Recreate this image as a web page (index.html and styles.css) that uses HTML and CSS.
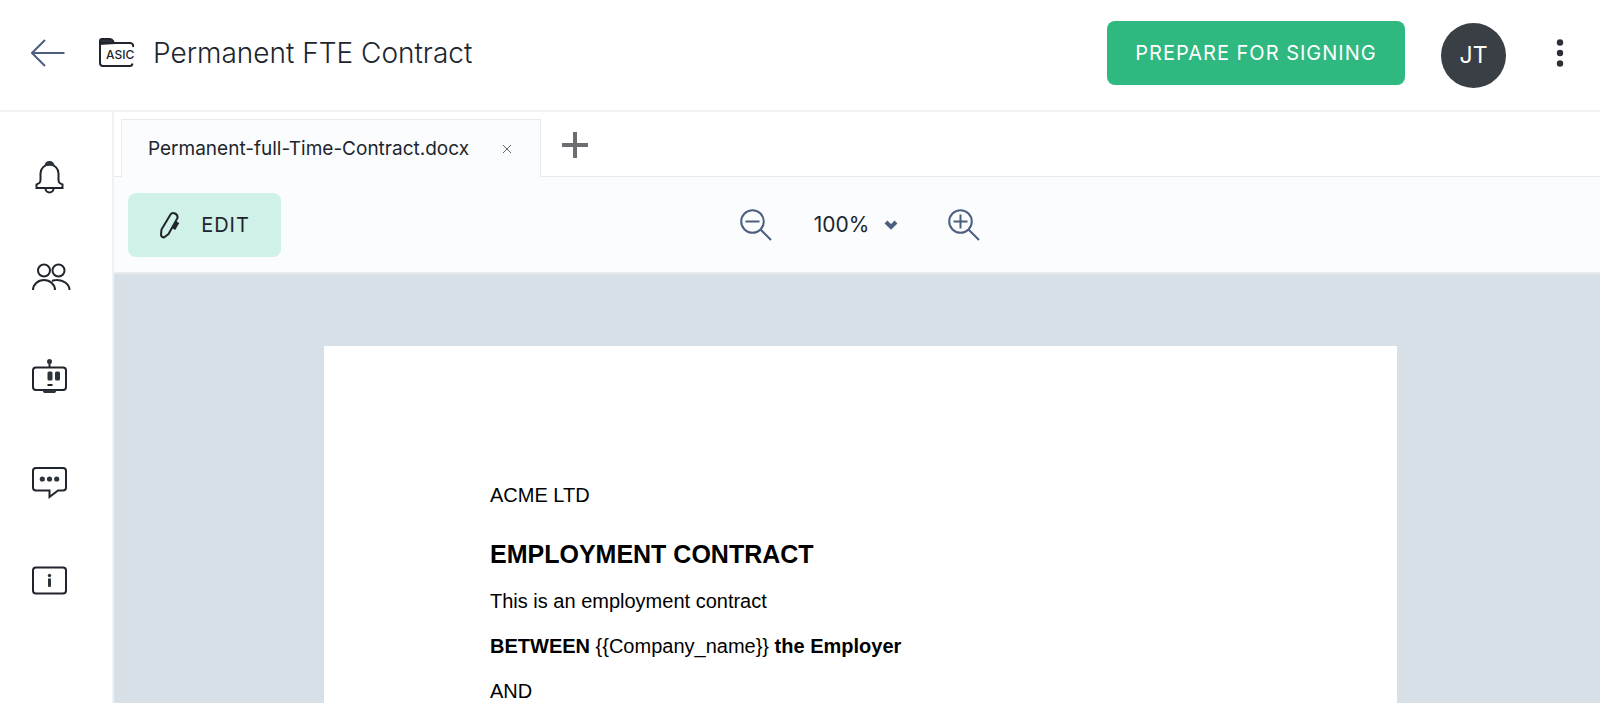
FILE: index.html
```html
<!DOCTYPE html>
<html lang="en">
<head>
    <meta charset="UTF-8">
    <meta name="viewport" content="width=device-width, initial-scale=1.0">
    <title>Permanent FTE Contract</title>
    <link rel="stylesheet" href="styles.css">
</head>
<body>
    <!-- Top bar -->
    <header class="topbar">
        <a href="#" class="back" aria-label="Back">
            <svg width="34" height="28" viewBox="0 0 34 28"><path d="M33.500 14H1M14 1L1 14l13 13"/></svg>
        </a>
        <svg class="folder" width="37" height="30" viewBox="0 0 37 30">
            <path class="tab-fill" d="M1 6V3a2 2 0 0 1 2-2h8q2 0 3 2l1 2z"/>
            <path d="M1 5h30a3 3 0 0 1 3 4M1 4v21a3 3 0 0 0 3 3h27q2 0 2.500-2.500"/>
            <text x="7" y="21">ASIC</text>
        </svg>
        <h1>Permanent FTE Contract</h1>
        <button type="button" class="prepare">PREPARE FOR SIGNING</button>
        <button type="button" class="avatar">JT</button>
        <button type="button" class="more" aria-label="More">
            <svg width="8" height="28" viewBox="0 0 8 28"><circle cx="4" cy="3.500" r="3.200"/><circle cx="4" cy="14" r="3.200"/><circle cx="4" cy="24.500" r="3.200"/></svg>
        </button>
    </header>

    <div class="main">
        <!-- Side menu -->
        <nav class="sidebar">
            <a href="#" aria-label="Notifications">
                <svg width="44" height="44" viewBox="0 0 44 44">
                    <path d="M9.500 28.500c2.500-1 4-1.500 4-5v-6a9 9 0 0 1 18 0v6c0 3.500 1.500 4 4 5V32h-26z"/>
                    <path d="M18.500 32.500a4 4 0 0 0 8 0"/>
                    <path class="fill" d="M17.500 10.500q0-5.500 5-5.500t5 5.500q-5-2-10 0z"/>
                </svg>
            </a>
            <a href="#" aria-label="People">
                <svg width="44" height="44" viewBox="0 0 44 44">
                    <circle cx="17" cy="13.500" r="6"/><circle cx="31.500" cy="13.500" r="6"/>
                    <path d="M6 33a11 10 0 0 1 22 0M25 24q2-1 4.500-1a12.500 10 0 0 1 13 10"/>
                </svg>
            </a>
            <a href="#" aria-label="Assistant">
                <svg width="44" height="44" viewBox="0 0 44 44">
                    <rect x="6" y="9.500" width="33" height="22.500" rx="3"/>
                    <path d="M22.500 9V3M20.500 27h5"/>
                    <circle class="fill" cx="22.500" cy="3.500" r="2.500"/>
                    <rect class="fill" x="20.500" y="13.500" width="5" height="9" rx="1.500"/>
                    <rect class="fill" x="28" y="13.500" width="5" height="9" rx="1.500"/>
                    <path class="fill" d="M15 32h15l-2 3H17z"/>
                </svg>
            </a>
            <a href="#" aria-label="Comments">
                <svg width="44" height="44" viewBox="0 0 44 44">
                    <path d="M9 9h27a3 3 0 0 1 3 3v16.500a3 3 0 0 1-3 3h-5L22.500 38v-6.500H9a3 3 0 0 1-3-3V12a3 3 0 0 1 3-3z"/>
                    <circle class="fill" cx="15.300" cy="20" r="2.600"/><circle class="fill" cx="22.500" cy="20" r="2.600"/><circle class="fill" cx="29.700" cy="20" r="2.600"/>
                </svg>
            </a>
            <a href="#" aria-label="Information">
                <svg width="44" height="44" viewBox="0 0 44 44">
                    <rect x="6" y="7.500" width="33" height="26" rx="3"/>
                    <circle class="fill" cx="22.500" cy="15.500" r="1.700"/>
                    <path class="fill" d="M21 18.500h3v8.300h-3z"/>
                </svg>
            </a>
        </nav>

        <div class="workspace">
            <!-- Document tabs -->
            <div class="tabs">
                <div class="tab">
                    <span>Permanent-full-Time-Contract.docx</span>
                    <button type="button" class="close" aria-label="Close tab">
                        <svg width="10" height="10" viewBox="0 0 10 10"><path d="M1 1l8 8M9 1L1 9"/></svg>
                    </button>
                </div>
                <button type="button" class="add" aria-label="Add document">
                    <svg width="26" height="26" viewBox="0 0 26 26"><path d="M13 0v26M0 13h26"/></svg>
                </button>
            </div>

            <div class="toolbar">
                <button type="button" class="edit">
                    <svg width="22" height="28" viewBox="0 0 22 28">
                        <path d="M11.500 3.500q1.500-2.500 4.500-1t2.500 4.500L9.500 23 5 26.500q-3-.5-3-3l.5-5z"/>
                        <path class="clip" d="M18.500 11l-4 7"/>
                    </svg>
                    EDIT
                </button>
                <div class="zoom">
                    <button type="button" aria-label="Zoom out">
                        <svg width="32" height="32" viewBox="0 0 32 32"><circle cx="12.500" cy="12.500" r="11.300"/><path d="M20.500 20.500L31 31M5.500 12.500h14"/></svg>
                    </button>
                    <button type="button" class="level">
                        100%
                        <svg width="14" height="10" viewBox="0 0 14 10"><path d="M2 2l5 5 5-5"/></svg>
                    </button>
                    <button type="button" aria-label="Zoom in">
                        <svg width="32" height="32" viewBox="0 0 32 32"><circle cx="12.500" cy="12.500" r="11.300"/><path d="M20.500 20.500L31 31M5.500 12.500h14M12.500 5.500v14"/></svg>
                    </button>
                </div>
            </div>

            <!-- Contract page -->
            <main class="viewer">
                <article class="paper">
                    <p class="company">ACME LTD</p>
                    <h2>EMPLOYMENT CONTRACT</h2>
                    <p>This is an employment contract</p>
                    <p><b>BETWEEN</b> {{Company_name}} <b>the Employer</b></p>
                    <p>AND</p>
                </article>
            </main>
        </div>
    </div>
</body>
</html>
```
FILE: styles.css
```css
* {
    box-sizing: border-box;
}

body {
    margin: 0;
    height: 100vh;
    display: flex;
    flex-direction: column;
    overflow: hidden;
    font-family: Inter, "Open Sans", sans-serif;
    color: #20252d;
    background-color: #fff;
}

button {
    padding: 0;
    border: none;
    background: none;
    font-family: inherit;
    color: inherit;
    cursor: pointer;
}

svg {
    display: block;
    flex: none;
    fill: none;
    stroke: #20252d;
    stroke-width: 2;
}

/* top bar */
.topbar {
    flex: none;
    height: 112px;
    padding: 0 36px 4px 31px;
    display: flex;
    align-items: center;
    border-bottom: 2px solid #f2f2f3;
}

.back svg {
    stroke: #4d5f80;
}

.folder {
    margin-left: 34px;
    overflow: visible;
}

.folder .tab-fill {
    fill: #2c333b;
}

.folder text {
    fill: #20252d;
    stroke: none;
    font-size: 12px;
    font-weight: 500;
}

h1 {
    margin: 0 auto 0 17px;
    font-size: 28px;
    font-weight: 300;
}

.prepare {
    width: 298px;
    height: 64px;
    border-radius: 8px;
    background-color: #2fb880;
    color: #fff;
    font-size: 20px;
    letter-spacing: 1px;
}

.avatar {
    width: 65px;
    height: 65px;
    margin: 4px 50px 0 36px;
    border-radius: 50%;
    background-color: #3a3f45;
    color: #fff;
    font-size: 23px;
}

.more svg {
    fill: #2c3036;
    stroke: none;
}

.main {
    flex: 1;
    min-height: 0;
    display: flex;
}

/* side menu */
.sidebar {
    flex: none;
    width: 114px;
    padding: 44px 0 0 27px;
    display: flex;
    flex-direction: column;
    gap: 57px;
    border-right: 2px solid #f0f1f3;
}

.sidebar a {
    width: 44px;
}

.sidebar .fill {
    fill: #2c333b;
    stroke: none;
}

.workspace {
    flex: 1;
    min-width: 0;
    display: flex;
    flex-direction: column;
}

/* tabs */
.tabs {
    flex: none;
    height: 65px;
    display: flex;
    align-items: flex-end;
}

.tabs::before {
    content: "";
    width: 7px;
    border-bottom: 1px solid #e8eaed;
}

.tab {
    height: 58px;
    width: 420px;
    padding: 0 28px 0 26px;
    display: flex;
    align-items: center;
    justify-content: space-between;
    border: 1px solid #e8eaed;
    border-bottom: none;
    background-color: #fafcfe;
    font-size: 19px;
    white-space: nowrap;
}

.close svg {
    stroke: #5d6570;
    stroke-width: 1;
}

.add {
    flex: 1;
    height: 64px;
    padding: 0 0 0 21px;
    border-bottom: 1px solid #e8eaed;
}

.add svg {
    stroke: #6c6e71;
    stroke-width: 4;
}

/* toolbar */
.toolbar {
    flex: none;
    height: 97px;
    padding: 0 8px 0 14px;
    display: grid;
    grid-template-columns: 1fr auto 1fr;
    align-items: center;
    border-bottom: 2px solid #e8ebee;
    background-color: #fafcfe;
}

.edit {
    width: 153px;
    height: 64px;
    display: flex;
    align-items: center;
    justify-content: center;
    gap: 20px;
    border-radius: 8px;
    background-color: #d0f1e7;
    font-size: 20px;
    letter-spacing: 1px;
}

.edit .clip {
    stroke-width: 4;
}

.zoom {
    display: flex;
    align-items: center;
    gap: 42px;
}

.zoom svg {
    stroke: #4d5f80;
}

.level {
    display: flex;
    align-items: center;
    gap: 15px;
    margin-right: 8px;
    font-size: 21px;
}

.level svg {
    stroke-width: 4;
}

/* document */
.viewer {
    flex: 1;
    min-height: 0;
    display: flex;
    justify-content: center;
    overflow: hidden;
    padding: 72px 203px 0 210px;
    background-color: #d7dfe7;
}

.paper {
    width: 100%;
    height: 1400px;
    padding: 137px 166px;
    background-color: #fff;
    color: #000;
    font-family: "Liberation Sans", Arial, sans-serif;
    font-size: 20px;
    line-height: 24px;
}

.paper p {
    margin: 0 0 21px;
}

.paper h2 {
    margin: 0 0 20px;
    font-size: 25px;
    line-height: 30px;
}

.paper .company {
    margin-bottom: 32px;
}
```
